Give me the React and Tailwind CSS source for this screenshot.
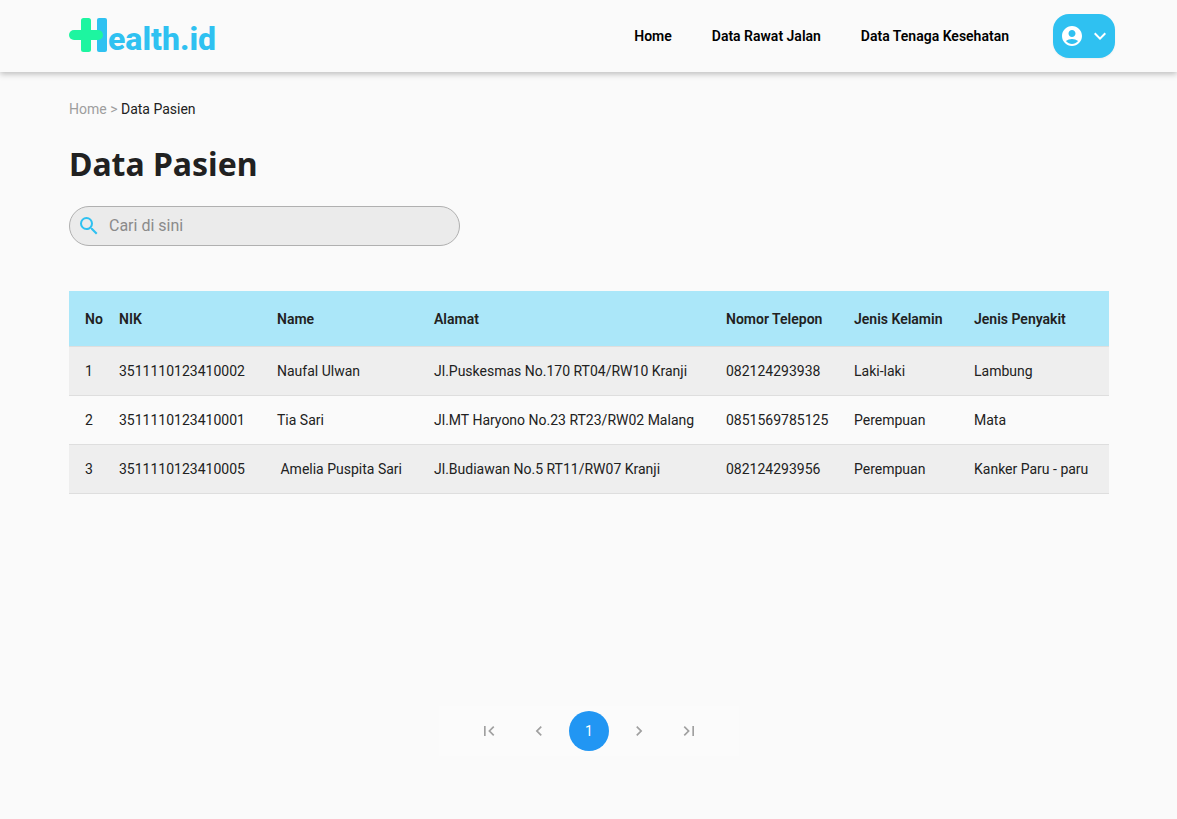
import React from "react";
import {
  MdAccountCircle,
  MdChevronLeft,
  MdChevronRight,
  MdFirstPage,
  MdKeyboardArrowDown,
  MdLastPage,
  MdSearch,
} from "react-icons/md";

const links = ["Home", "Data Rawat Jalan", "Data Tenaga Kesehatan"];

const columns = [
  { label: "No", width: "w-[50px]" },
  { label: "NIK", width: "w-[158px]" },
  { label: "Name", width: "w-[157px]" },
  { label: "Alamat", width: "w-[292px]" },
  { label: "Nomor Telepon", width: "w-[128px]" },
  { label: "Jenis Kelamin", width: "w-[120px]" },
  { label: "Jenis Penyakit", width: "w-auto" },
];

const patients = [
  ["1", "3511110123410002", "Naufal Ulwan", "Jl.Puskesmas No.170 RT04/RW10 Kranji", "082124293938", "Laki-laki", "Lambung"],
  ["2", "3511110123410001", "Tia Sari", "Jl.MT Haryono No.23 RT23/RW02 Malang", "0851569785125", "Perempuan", "Mata"],
  ["3", "3511110123410005", " Amelia Puspita Sari", "Jl.Budiawan No.5 RT11/RW07 Kranji", "082124293956", "Perempuan", "Kanker Paru - paru"],
];

function Logo() {
  return (
    <a href="#" aria-label="Health.id" className="flex items-center">
      <svg width="39" height="38" viewBox="0 0 39 38" aria-hidden="true">
        <rect x="28" y="1" width="10" height="34" rx="2" fill="#2fc1f1" />
        <rect x="12" y="1" width="10" height="34" rx="2.5" fill="#1df5a0" />
        <rect x="0" y="13" width="34" height="10" rx="5" fill="#1df5a0" />
      </svg>
      <span className="pt-1.5 text-[32px] leading-9 font-extrabold text-[#2fc1f1]">ealth.id</span>
    </a>
  );
}

function Header() {
  return (
    <header className="flex h-[72px] items-center justify-between bg-[#fafafa] pr-[62px] pb-px pl-[69px] shadow-[0_2px_6px_rgba(0,0,0,0.25)]">
      <Logo />
      <div className="flex items-center gap-11">
        <nav className="flex gap-10 text-sm font-semibold text-black">
          {links.map((label) => (
            <a key={label} href="#">{label}</a>
          ))}
        </nav>
        <button
          type="button"
          aria-label="Akun"
          className="flex h-11 w-[62px] items-center justify-between rounded-2xl bg-[#2fc1f1] pr-[3px] pl-[7px] text-white shadow-xs"
        >
          <MdAccountCircle size={24} />
          <MdKeyboardArrowDown size={24} />
        </button>
      </div>
    </header>
  );
}

function PatientTable() {
  return (
    <div className="overflow-x-auto">
      <table className="w-full min-w-[1020px] table-fixed border-collapse text-left text-sm">
        <thead>
          <tr className="h-[55px] border-b border-[#dedede] bg-[#abe7f9]">
            {columns.map(({ label, width }) => (
              <th key={label} scope="col" className={`${width} px-0 pt-0.5 pb-0 font-semibold first:pl-4`}>{label}</th>
            ))}
          </tr>
        </thead>
        <tbody>
          {patients.map((row) => (
            <tr key={row[0]} className="h-[49px] border-b border-[#dedede] odd:bg-[#eeeeee]">
              {row.map((cell, i) => (
                <td key={i} className="p-0 whitespace-pre first:pl-4">{cell}</td>
              ))}
            </tr>
          ))}
        </tbody>
      </table>
    </div>
  );
}

function PageButton({ label, children }) {
  return (
    <button type="button" aria-label={label} className="flex size-10 items-center justify-center text-[#a0a0a0]">
      {children}
    </button>
  );
}

function Pagination() {
  return (
    <nav aria-label="Halaman" className="flex h-[50px] w-[300px] items-center justify-center gap-[10px] bg-[#fbfbfb]">
      <PageButton label="Halaman pertama"><MdFirstPage size={20} /></PageButton>
      <PageButton label="Sebelumnya"><MdChevronLeft size={20} /></PageButton>
      <button type="button" aria-current="page" className="size-10 rounded-full bg-[#2196f3] text-sm text-white">1</button>
      <PageButton label="Berikutnya"><MdChevronRight size={20} /></PageButton>
      <PageButton label="Halaman terakhir"><MdLastPage size={20} /></PageButton>
    </nav>
  );
}

export default function App() {
  return (
    <div className="min-h-screen bg-[#fafafa] font-['Roboto',sans-serif] text-[#212121]">
      <Header />
      <main className="pt-[27px] pr-[68px] pb-16 pl-[69px]">
        <p className="text-sm text-[#9e9e9e]">
          <a href="#">Home</a> &gt; <span className="text-[#212121]">Data Pasien</span>
        </p>
        <h1 className="mt-[22px] font-['Noto_Sans',sans-serif] text-[32px] leading-[46px] font-bold">Data Pasien</h1>
        <label className="mt-[19px] flex h-10 w-[391px] max-w-full items-center rounded-full border border-[#b0b0b0] bg-[#ebebeb] pl-[7px]">
          <MdSearch size={24} className="shrink-0 text-[#2fc1f1]" />
          <input
            type="search"
            aria-label="Cari pasien"
            placeholder="Cari di sini"
            className="ml-2 w-full bg-transparent text-base outline-none placeholder:text-[#8a8a8a]"
          />
        </label>
        <div className="mt-[45px] min-h-[415px]">
          <PatientTable />
        </div>
        <div className="flex justify-center">
          <Pagination />
        </div>
      </main>
    </div>
  );
}
